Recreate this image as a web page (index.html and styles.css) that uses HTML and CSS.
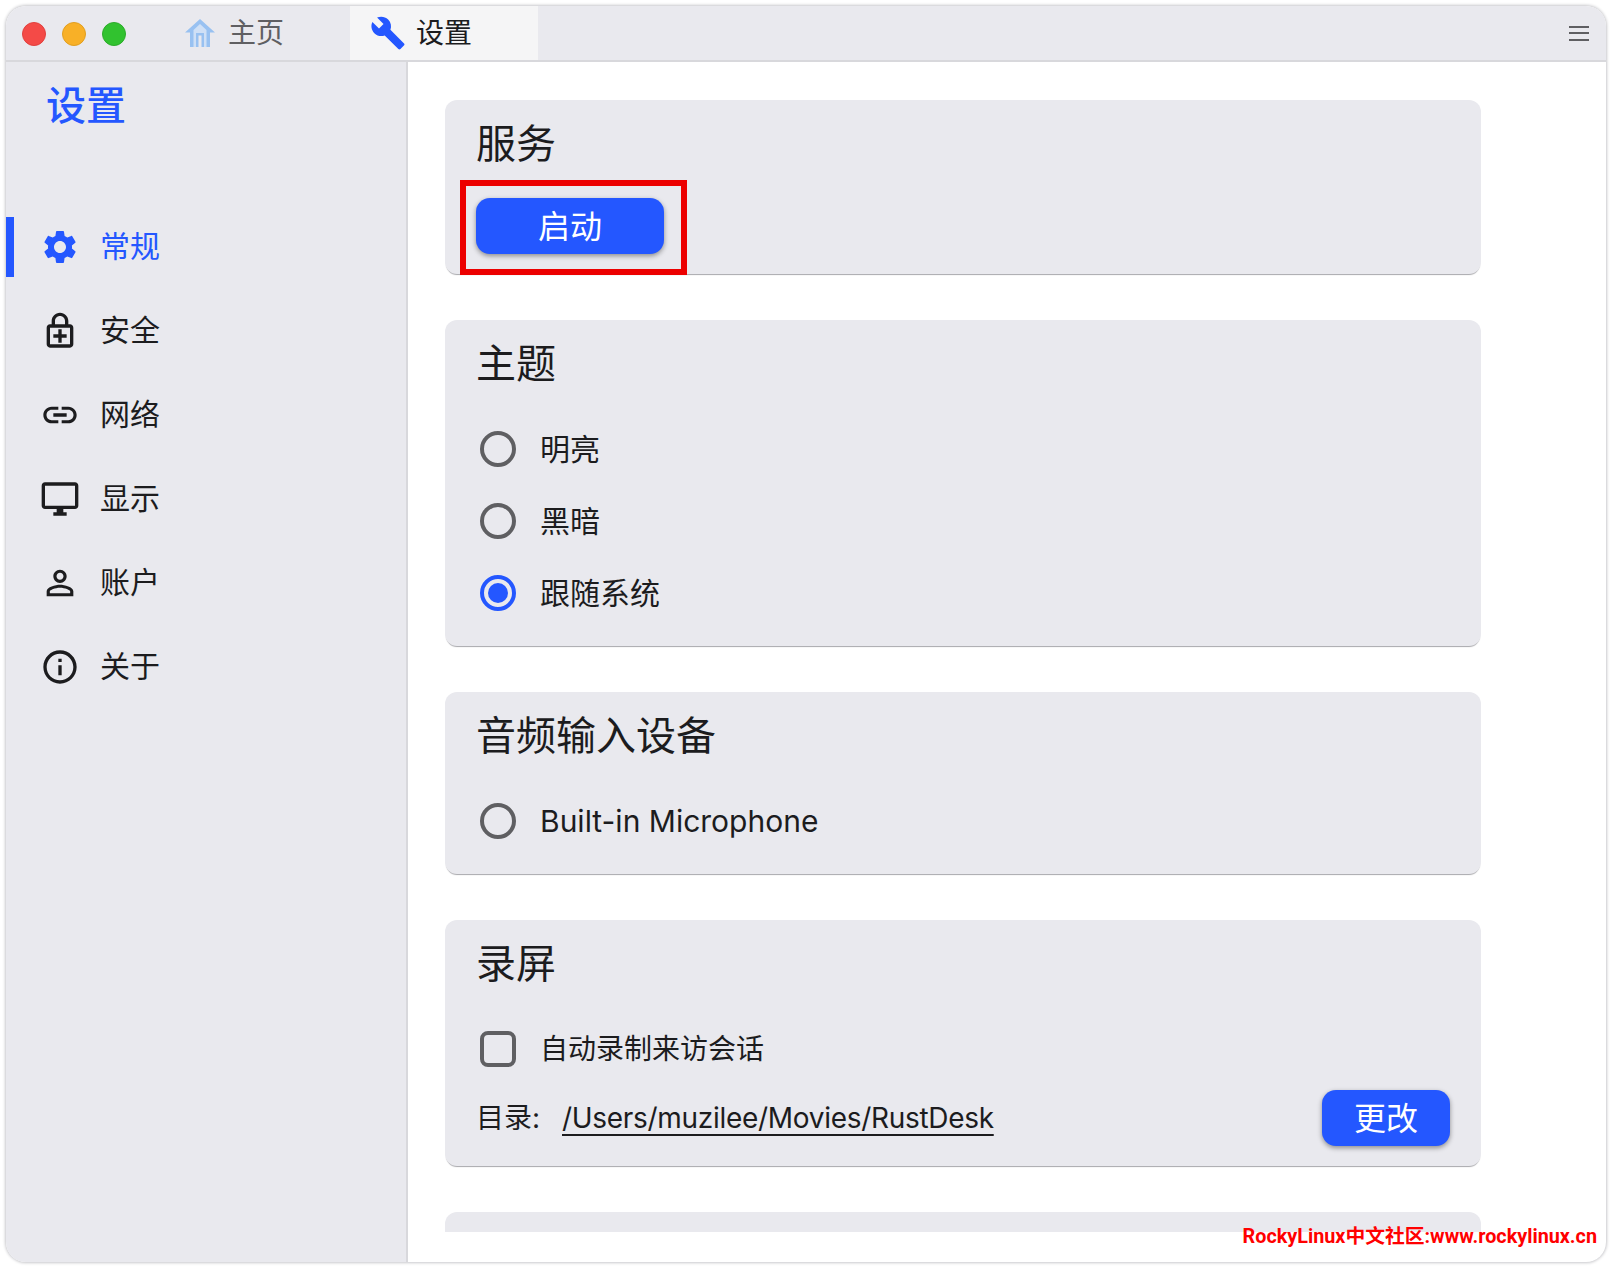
FILE: index.html
```html
<!DOCTYPE html>
<html lang="zh-CN">
<head>
    <meta charset="utf-8"/>
    <title>设置</title>
    <link rel="stylesheet" href="styles.css">
</head>
<body>
    <div class="window">
        <header class="titlebar">
            <div class="lights">
                <span class="light red"></span>
                <span class="light yellow"></span>
                <span class="light green"></span>
            </div>
            <div class="tab">
                <svg class="tab-icon home" viewBox="5 5 30 28">
                    <path d="M20 5 5 18.500h5V33h8.500V21.500h3V33H30V18.500h5z"/>
                    <path class="home-inner" d="M20 10l-6.500 6V33H16V19h8v14h2.500V16z"/>
                </svg>
                <span>主页</span>
            </div>
            <div class="tab active">
                <svg class="tab-icon" viewBox="0 0 24 24"><path d="M22.700 19l-9.100-9.100c.9-2.300.4-5-1.500-6.900-2-2-5-2.400-7.400-1.300L9 6 6 9 1.600 4.700C.4 7.100.9 10.100 2.900 12.100c1.900 1.900 4.600 2.400 6.900 1.500l9.100 9.100c.4.4 1 .4 1.400 0l2.300-2.300c.5-.4.5-1.100.1-1.400z"/></svg>
                <span>设置</span>
            </div>
            <div class="menu"><i></i><i></i><i></i></div>
        </header>
        <div class="body">
            <aside class="sidebar">
                <h1>设置</h1>
                <nav>
                    <a class="nav-item selected">
                        <svg viewBox="0 0 24 24"><path d="M19.140 12.940c.04-.3.06-.61.06-.94 0-.32-.02-.64-.07-.94l2.030-1.580c.18-.14.23-.41.12-.61l-1.920-3.320c-.12-.22-.37-.29-.59-.22l-2.390.96c-.5-.38-1.030-.7-1.620-.94l-.36-2.540c-.04-.24-.24-.41-.48-.41h-3.840c-.24 0-.43.17-.47.41l-.36 2.540c-.59.24-1.130.57-1.620.94l-2.390-.96c-.22-.08-.47 0-.59.22L2.740 8.870c-.12.21-.08.47.12.61l2.030 1.580c-.05.3-.09.63-.09.94s.02.64.07.94l-2.030 1.580c-.18.14-.23.41-.12.61l1.920 3.320c.12.22.37.29.59.22l2.390-.96c.5.38 1.030.7 1.620.94l.36 2.540c.05.24.24.41.48.41h3.840c.24 0 .44-.17.47-.41l.36-2.540c.59-.24 1.130-.56 1.620-.94l2.390.96c.22.08.47 0 .59-.22l1.920-3.320c.12-.22.07-.47-.12-.61l-2.010-1.580zM12 15.600c-1.980 0-3.600-1.620-3.600-3.600s1.620-3.600 3.600-3.600 3.600 1.620 3.600 3.600-1.620 3.600-3.600 3.600z"/></svg>
                        <span>常规</span>
                    </a>
                    <a class="nav-item">
                        <svg viewBox="0 0 24 24"><path d="M18 8h-1V6c0-2.760-2.240-5-5-5S7 3.240 7 6v2H6c-1.100 0-2 .9-2 2v10c0 1.100.9 2 2 2h12c1.100 0 2-.9 2-2V10c0-1.100-.9-2-2-2zM9 6c0-1.660 1.340-3 3-3s3 1.340 3 3v2H9V6zm9 14H6V10h12v10zm-7-1h2v-3h3v-2h-3v-3h-2v3H8v2h3z"/></svg>
                        <span>安全</span>
                    </a>
                    <a class="nav-item">
                        <svg viewBox="0 0 24 24"><path d="M3.900 12c0-1.710 1.390-3.100 3.100-3.100h4V7H7c-2.760 0-5 2.240-5 5s2.240 5 5 5h4v-1.900H7c-1.710 0-3.100-1.390-3.100-3.100zM8 13h8v-2H8v2zm9-6h-4v1.900h4c1.710 0 3.100 1.390 3.100 3.100s-1.390 3.100-3.100 3.100h-4V17h4c2.760 0 5-2.240 5-5s-2.240-5-5-5z"/></svg>
                        <span>网络</span>
                    </a>
                    <a class="nav-item">
                        <svg viewBox="0 0 24 24"><path d="M21 2H3c-1.100 0-2 .9-2 2v12c0 1.100.9 2 2 2h7v2H8v2h8v-2h-2v-2h7c1.100 0 2-.9 2-2V4c0-1.100-.9-2-2-2zm0 14H3V4h18v12z"/></svg>
                        <span>显示</span>
                    </a>
                    <a class="nav-item">
                        <svg viewBox="0 0 24 24"><path d="M12 5.900c1.160 0 2.100.94 2.100 2.100s-.94 2.100-2.100 2.100S9.900 9.160 9.900 8s.94-2.100 2.100-2.100m0 9c2.970 0 6.100 1.460 6.100 2.100v1.100H5.900V17c0-.64 3.130-2.100 6.100-2.100M12 4C9.790 4 8 5.790 8 8s1.790 4 4 4 4-1.790 4-4-1.790-4-4-4zm0 9c-2.670 0-8 1.340-8 4v3h16v-3c0-2.660-5.330-4-8-4z"/></svg>
                        <span>账户</span>
                    </a>
                    <a class="nav-item">
                        <svg viewBox="0 0 24 24"><path d="M11 7h2v2h-2zm0 4h2v6h-2zm1-9C6.480 2 2 6.480 2 12s4.480 10 10 10 10-4.480 10-10S17.520 2 12 2zm0 18c-4.410 0-8-3.590-8-8s3.590-8 8-8 8 3.590 8 8-3.590 8-8 8z"/></svg>
                        <span>关于</span>
                    </a>
                </nav>
            </aside>
            <main class="content">
                <div class="scroll">
                    <section class="card card-service">
                        <h2>服务</h2>
                        <div class="highlight">
                            <button class="btn btn-start">启动</button>
                        </div>
                    </section>
                    <section class="card">
                        <h2>主题</h2>
                        <ul class="options">
                            <li><span class="radio"></span><span class="label">明亮</span></li>
                            <li><span class="radio"></span><span class="label">黑暗</span></li>
                            <li><span class="radio checked"></span><span class="label">跟随系统</span></li>
                        </ul>
                    </section>
                    <section class="card">
                        <h2>音频输入设备</h2>
                        <ul class="options">
                            <li><span class="radio"></span><span>Built-in Microphone</span></li>
                        </ul>
                    </section>
                    <section class="card card-record">
                        <h2>录屏</h2>
                        <ul class="options">
                            <li><span class="checkbox"></span><span class="label">自动录制来访会话</span></li>
                        </ul>
                        <div class="dir-row">
                            <span class="dir-label">目录:</span>
                            <a class="dir-path">/Users/muzilee/Movies/RustDesk</a>
                            <button class="btn btn-change">更改</button>
                        </div>
                    </section>
                    <section class="card card-more"></section>
                </div>
                <div class="watermark">RockyLinux中文社区:www.rockylinux.cn</div>
            </main>
        </div>
    </div>
</body>
</html>
```

FILE: styles.css
```css
* {
    box-sizing: border-box;
}

body {
    margin: 0;
    background-color: #fff;
    font-family: Inter, "Noto Sans CJK SC", sans-serif;
    color: #1c1c1e;
}

.window {
    width: 1600px;
    height: 1256px;
    margin: 6px;
    border-radius: 20px;
    overflow: hidden;
    background-color: #fff;
    box-shadow: 0 0 3px 1px #c8c8cc;
    display: flex;
    flex-direction: column;
}

.titlebar {
    height: 56px;
    flex: none;
    display: flex;
    background-color: #e9e9ee;
    border-bottom: 2px solid #d8d8dc;
}

.lights {
    display: flex;
    align-items: center;
    gap: 16px;
    width: 170px;
    padding-left: 16px;
    padding-top: 2px;
}

.light {
    width: 24px;
    height: 24px;
    border-radius: 50%;
}

.red { background-color: #f44a47; border: 1px solid #e0403e; }
.yellow { background-color: #f8b027; border: 1px solid #e09e20; }
.green { background-color: #31c22f; border: 1px solid #2cab2a; }

.tab {
    width: 174px;
    padding-left: 9px;
    display: flex;
    align-items: center;
    gap: 13px;
    font-size: 28px;
    color: #5f5f62;
}

.tab span {
    padding-bottom: 4px;
}

.tab-icon {
    width: 30px;
    height: 28px;
    fill: #98c1f1;
}

.home-inner {
    fill: #cfe0f6;
}

.tab.active {
    width: 188px;
    padding-left: 20px;
    gap: 10px;
    background-color: #f5f5f6;
    color: #1c1c1e;
}

.tab.active .tab-icon {
    width: 36px;
    height: 36px;
    fill: #2457ff;
}

.menu {
    margin-left: auto;
    margin-right: 17px;
    display: flex;
    flex-direction: column;
    justify-content: center;
    gap: 4.500px;
}

.menu i {
    display: block;
    width: 20px;
    height: 2px;
    background-color: #5f5f62;
}

.body {
    flex: 1;
    display: flex;
    min-height: 0;
}

.sidebar {
    width: 402px;
    flex: none;
    background-color: #e9e9ee;
    border-right: 2px solid #d8d8dc;
}

.sidebar h1 {
    margin: 14px 0 0 40px;
    font-size: 40px;
    line-height: 60px;
    font-weight: 500;
    color: #2457ff;
}

nav {
    margin-top: 81px;
    display: flex;
    flex-direction: column;
    gap: 24px;
}

.nav-item {
    height: 60px;
    display: flex;
    align-items: center;
    gap: 20px;
    padding-left: 34px;
    font-size: 30px;
}

.nav-item span {
    padding-bottom: 6px;
}

.nav-item svg {
    width: 40px;
    height: 40px;
    fill: #1c1c1e;
}

.nav-item.selected {
    color: #2457ff;
    border-left: 8px solid #2457ff;
    padding-left: 26px;
}

.nav-item.selected svg {
    fill: #2457ff;
}

.content {
    flex: 1;
    min-width: 0;
    display: flex;
    flex-direction: column;
}

.scroll {
    height: 1170px;
    flex: none;
    overflow: hidden;
    padding: 38px 0 0 37px;
}

.card {
    width: 1036px;
    margin-bottom: 46px;
    padding: 18px 31px 0;
    border-radius: 12px;
    background-color: #e9e9ee;
    box-shadow: 0 2px 1px -1px #a8a8ac;
}

.card h2 {
    margin: -2px 0 2px;
    font-size: 40px;
    line-height: 56px;
    font-weight: 400;
}

.card-service {
    height: 174px;
}

.card-record {
    padding-bottom: 20px;
}

.card-more {
    height: 120px;
}

.highlight {
    width: 227px;
    height: 95px;
    margin: 8px 0 0 -16px;
    border: 6px solid #ec0000;
    padding: 12px 10px;
}

.btn {
    border: 0;
    border-radius: 14px;
    background-color: #2457ff;
    color: #fff;
    font-family: inherit;
    font-size: 32px;
    box-shadow: 0 2px 5px rgba(0, 0, 0, 0.4);
    padding: 0 0 4px;
}

.btn-start {
    width: 188px;
    height: 56px;
}

.btn-change {
    width: 128px;
    height: 56px;
    margin-left: auto;
}

.options {
    list-style: none;
    margin: 0;
    padding: 19px 0 17px;
}

.options li {
    height: 72px;
    display: flex;
    align-items: center;
    gap: 24px;
    padding-left: 4px;
    font-size: 30px;
}

.label {
    padding-bottom: 4px;
}

.radio {
    position: relative;
    width: 36px;
    height: 36px;
    border: 4px solid #5f5f62;
    border-radius: 50%;
}

.radio.checked {
    border-color: #2457ff;
}

.radio.checked::after {
    content: "";
    position: absolute;
    inset: 4px;
    border-radius: 50%;
    background-color: #2457ff;
}

.checkbox {
    width: 36px;
    height: 36px;
    border: 4px solid #5f5f62;
    border-radius: 8px;
}

.card-record .options {
    padding-bottom: 5px;
}

.card-record .options li {
    font-size: 28px;
}

.dir-row {
    display: flex;
    align-items: center;
    height: 56px;
    font-size: 28px;
}

.dir-label {
    width: 86px;
    padding-bottom: 4px;
}

.dir-path {
    letter-spacing: -0.3px;
    text-decoration: underline 2px;
    text-underline-offset: 6px;
    text-decoration-skip-ink: none;
}

.watermark {
    text-align: right;
    padding-right: 9px;
    line-height: 10px;
    font-family: Roboto, "Noto Sans CJK SC", sans-serif;
    font-size: 19.800px;
    font-weight: 700;
    color: #f00;
}
```
